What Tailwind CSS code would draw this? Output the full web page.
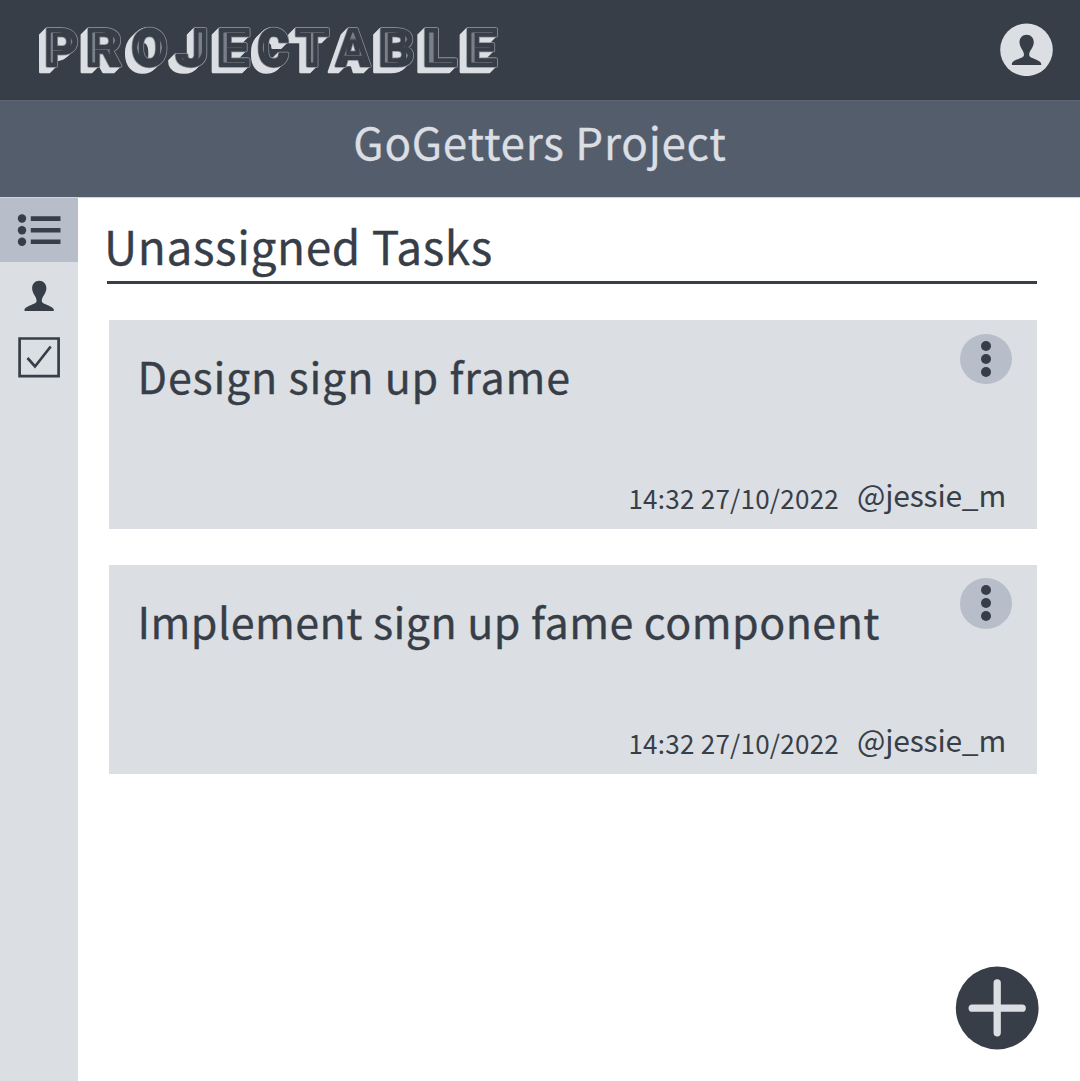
<!DOCTYPE html>
<html lang="en">
<head>
<meta charset="utf-8">
<title>Projectable</title>
<script src="https://cdn.jsdelivr.net/npm/@tailwindcss/browser@4"></script>
</head>
<body class="flex h-[1081px] w-[1080px] flex-col overflow-hidden bg-white font-['Noto_Sans_CJK_SC','Open_Sans',sans-serif] text-[#383e48]">
<header class="flex h-[100px] shrink-0 items-start justify-between bg-[#383e48] pr-[27px]">
  <svg class="h-[100px] w-[520px]" viewBox="0 0 520 100" font-family="Roboto, sans-serif" font-weight="900" font-size="52.500" stroke-linejoin="round">
    <defs>
      <filter id="inline" x="0" y="0" width="520" height="100" filterUnits="userSpaceOnUse" color-interpolation-filters="sRGB">
        <feMorphology operator="erode" radius="4 4"/>
      </filter>
      <text id="word" y="65.500"><tspan x="44.500" textLength="34" lengthAdjust="spacingAndGlyphs">P</tspan><tspan x="86" textLength="36" lengthAdjust="spacingAndGlyphs">R</tspan><tspan x="131.500" textLength="36" lengthAdjust="spacingAndGlyphs">O</tspan><tspan x="175.500" textLength="33" lengthAdjust="spacingAndGlyphs">J</tspan><tspan x="217" textLength="32.500" lengthAdjust="spacingAndGlyphs">E</tspan><tspan x="257.500" textLength="31.500" lengthAdjust="spacingAndGlyphs">C</tspan><tspan x="295.500" textLength="33.500" lengthAdjust="spacingAndGlyphs">T</tspan><tspan x="336" textLength="34" lengthAdjust="spacingAndGlyphs">A</tspan><tspan x="378.500" textLength="36" lengthAdjust="spacingAndGlyphs">B</tspan><tspan x="422.500" textLength="34.500" lengthAdjust="spacingAndGlyphs">L</tspan><tspan x="465" textLength="32" lengthAdjust="spacingAndGlyphs">E</tspan></text>
    </defs>
    <g fill="#dbdee3" stroke="#dbdee3" stroke-width="2.600">
      <use href="#word" x="-7" y="6"/><use href="#word" x="-6" y="5.100"/><use href="#word" x="-5" y="4.300"/><use href="#word" x="-4" y="3.400"/><use href="#word" x="-3" y="2.600"/><use href="#word" x="-2" y="1.700"/><use href="#word" x="-1" y=".9"/>
    </g>
    <use href="#word" fill="#8b9099" stroke="#8b9099" stroke-width="3.400"/>
    <use href="#word" fill="#383e48" stroke="#383e48" stroke-width="1.900"/>
    <g filter="url(#inline)"><use href="#word" fill="#7b818b" stroke="#7b818b" stroke-width="1.200"/></g>
  </svg>
  <svg class="mt-[23px] size-[53px]" viewBox="0 0 53 53">
    <circle cx="26.500" cy="26.800" r="26.300" fill="#dbdee3"/>
    <path fill="#383e48" d="M26.600 11.700c-4.300 0-7.100 3.200-7.100 7.500 0 5.200 4.500 8.300 4.500 12.500 0 2.200-2.600 3-5.500 4.200-3.300 1.400-6.600 2.900-6.600 5v1.200h29.300v-1.200c0-2.100-3.300-3.600-6.600-5-2.900-1.200-5.400-2-5.400-4.200 0-4.200 4.600-7.300 4.600-12.500 0-4.300-2.900-7.500-7.200-7.500z"/>
  </svg>
</header>
<div class="flex h-[97px] shrink-0 justify-center border-t border-[#5c6574] bg-[#545d6c]">
  <h1 class="text-[44px] leading-[80px] tracking-[0.750px] whitespace-nowrap text-[#dbdee3] [-webkit-text-stroke:0.3px]">GoGetters Project</h1>
</div>
<div class="flex min-h-0 flex-1 border-t border-[#8d94a0]/40">
  <nav class="flex w-[78px] shrink-0 flex-col bg-[#dbdee3]">
    <a class="flex h-[64px] items-start bg-[#b7bec9]">
      <svg class="ml-[17px] h-[64px] w-[45px]" viewBox="0 0 45 64" fill="#383e48">
        <circle cx="5" cy="20.500" r="4.200"/><circle cx="5" cy="32.200" r="4.200"/><circle cx="5" cy="43.700" r="4.200"/>
        <path d="M13.800 18.200h29.700v4.700H13.800zM13.800 29.900h29.700v4.700H13.800zM13.800 41.400h29.700v4.700H13.800z"/>
      </svg>
    </a>
    <a class="mt-[18px] ml-[24px]">
      <svg class="h-[32px] w-[30px]" viewBox="0 0 30 32"><path fill="#383e48" d="M15.200.7C10.900.7 8.100 3.900 8.100 8.200c0 5.200 4.500 8.300 4.500 12.500 0 2.200-2.600 3-5.500 4.200C3.800 26.300.5 27.800.5 29.700V31h29.300v-1.300c0-1.900-3.300-3.400-6.600-4.800-2.900-1.200-5.400-2-5.400-4.200 0-4.200 4.600-7.300 4.600-12.500C22.400 3.900 19.500.7 15.200.7z"/></svg>
    </a>
    <a class="mt-[25px] ml-[18px]">
      <svg class="h-[41px] w-[42px]" viewBox="0 0 42 41" fill="none" stroke="#383e48" stroke-width="2.700"><path d="M1.600 1.500h39v37.600h-39z"/><path d="M9.500 21l7.500 8.500L32.700 9.500"/></svg>
    </a>
  </nav>
  <main class="flex flex-1 flex-col pr-[43px] pl-[29px]">
    <h2 class="h-[86px] border-b-3 border-[#383e48] text-[46px] leading-[94px] tracking-[0.600px] whitespace-nowrap [-webkit-text-stroke:0.3px]"><span class="ml-[-3px]">Unassigned Tasks</span></h2>
    <section class="mt-[36px] flex flex-col gap-[35.500px]">
      <article class="ml-[1.500px] flex h-[209px] flex-col justify-between bg-[#dbdee3] pr-[25px] pl-[29px]">
        <div class="flex items-start justify-between">
          <h3 class="text-[43px] leading-[110px] tracking-[0.800px] whitespace-nowrap [-webkit-text-stroke:0.3px]">Design sign up frame</h3>
          <button class="mt-[13.500px] flex h-[50.500px] w-[52px] flex-col items-center justify-center gap-[3.400px] rounded-[50%] bg-[#b7bec9]"><i class="size-[9.600px] rounded-full bg-[#383e48]"></i><i class="size-[9.600px] rounded-full bg-[#383e48]"></i><i class="size-[9.600px] rounded-full bg-[#383e48]"></i></button>
        </div>
        <div class="flex h-[56px] items-start justify-end gap-[18px] pr-[6px] whitespace-nowrap"><span class="pt-[2px] text-[26px] leading-[46px] tracking-[0.250px]">14:32 27/10/2022</span><span class="text-[30px] leading-[42px] tracking-[-0.200px]">@jessie_m</span></div>
      </article>
      <article class="ml-[1.500px] flex h-[209px] flex-col justify-between bg-[#dbdee3] pr-[25px] pl-[29px]">
        <div class="flex items-start justify-between">
          <h3 class="text-[43px] leading-[110px] tracking-[0.460px] whitespace-nowrap [-webkit-text-stroke:0.3px]">Implement sign up fame component</h3>
          <button class="mt-[13.500px] flex h-[50.500px] w-[52px] flex-col items-center justify-center gap-[3.400px] rounded-[50%] bg-[#b7bec9]"><i class="size-[9.600px] rounded-full bg-[#383e48]"></i><i class="size-[9.600px] rounded-full bg-[#383e48]"></i><i class="size-[9.600px] rounded-full bg-[#383e48]"></i></button>
        </div>
        <div class="flex h-[56px] items-start justify-end gap-[18px] pr-[6px] whitespace-nowrap"><span class="pt-[2px] text-[26px] leading-[46px] tracking-[0.250px]">14:32 27/10/2022</span><span class="text-[30px] leading-[42px] tracking-[-0.200px]">@jessie_m</span></div>
      </article>
    </section>
    <button class="mt-auto mr-[-2px] mb-[31px] self-end">
      <svg class="size-[84px]" viewBox="0 0 84 84"><circle cx="42.200" cy="42" r="41.400" fill="#383e48"/><path d="M42.200 16.800v50M17.200 42.200h50" stroke="#dbdee3" stroke-width="7.300" stroke-linecap="round"/></svg>
    </button>
  </main>
</div>
</body>
</html>
